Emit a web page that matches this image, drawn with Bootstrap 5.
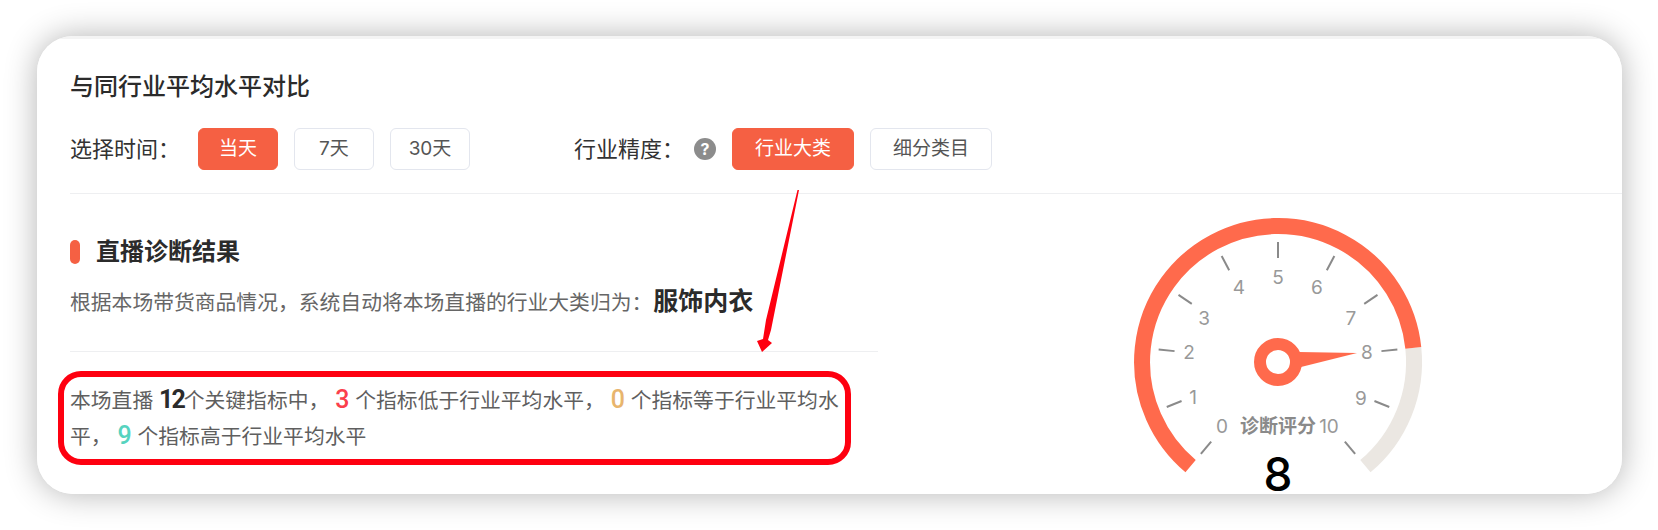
<!doctype html>
<html lang="zh">
<head>
<meta charset="utf-8">
<title>与同行业平均水平对比</title>
<link href="https://cdn.jsdelivr.net/npm/bootstrap@5.3.0/dist/css/bootstrap.min.css" rel="stylesheet">
<style>
html,body{height:530px;overflow:hidden;background:#fff}
body{font-family:Inter,"Noto Sans CJK SC",sans-serif;color:#333}
.stage{position:relative;width:1658px;height:530px;padding:36px 36px 36px 37px}
.panel{height:458px;background:linear-gradient(#f4f4f4 3px,#fff 3px);border-radius:36px;box-shadow:0 0 32px rgba(0,0,0,.3);overflow:hidden;padding:3px 0 0 33px}
.head-title{font-size:24px;line-height:30px;font-weight:500;color:#2b2b2b;margin:0;padding-top:33px}
.filter-row{margin-top:26px;height:42px}
.filter-label{font-size:22px;color:#333;white-space:nowrap}
.time-label{width:128px}
.prec-label{width:120px;margin-left:88px}
.btn.chip{font-size:19px;height:42px;line-height:40px;padding:0;border:1px solid #e3e6ee;border-radius:6px;background:#fff;color:#555;font-weight:400;width:80px;margin-right:16px}
.btn.chip.wide{width:122px}
.btn.chip.on{background:#f56043;border-color:#f56043;color:#fff}
.help-dot{width:22px;height:22px;border-radius:50%;background:#8c8c8c;color:#fff;font-size:16px;font-weight:700;line-height:22px;text-align:center;margin-right:16px}
.rule-full{height:1px;background:#eeeff1;margin-top:23px}
.left-pane{flex:0 0 808px}
.sec-head{margin-top:44px;height:28px}
.sec-mark{width:10px;height:24px;border-radius:5px;background:#f56043;margin-right:16px}
.sec-title{font-size:24px;line-height:28px;font-weight:700;color:#2b2b2b;margin:0}
.sec-desc{font-size:20.8px;line-height:36px;color:#666;margin:17px 0 0;white-space:nowrap}
.sec-desc strong{font-size:25px;font-weight:700;color:#2b2b2b;margin-left:1px}
.rule-part{height:1px;background:#eeeff1;margin-top:30px}
.sum-text{font-size:20.8px;line-height:36px;color:#5f5f5f;width:780px;margin:31px 0 0}
.num{font-family:Roboto,sans-serif;font-size:25px;font-weight:500;line-height:1}
.num-dark{color:#2b2b2b;font-weight:700;letter-spacing:-2px}
.num-red{color:#fb3f4c}
.num-gold{color:#e8b56d}
.num-teal{color:#56d3bf}
.gauge{flex:0 0 340px;width:340px;height:294px;margin:6px 0 0 230px}
.gauge .lbl{font-size:19px;fill:#999;text-anchor:middle;dominant-baseline:central}
.gauge .cap{font-size:19px;font-weight:700;fill:#8a8a8a;text-anchor:middle;dominant-baseline:central}
.gauge .val{font-size:46px;font-weight:500;fill:#000;text-anchor:middle}
.gauge .tick{stroke:#8a8a8a;stroke-width:2}
.notes{position:absolute;left:0;top:0;pointer-events:none}
</style>
</head>
<body>
<div class="stage">
  <div class="panel">
    <h5 class="head-title">与同行业平均水平对比</h5>
    <div class="filter-row d-flex align-items-center">
      <span class="filter-label time-label">选择时间：</span>
      <button type="button" class="btn chip on">当天</button>
      <button type="button" class="btn chip">7天</button>
      <button type="button" class="btn chip">30天</button>
      <span class="filter-label prec-label">行业精度：</span>
      <span class="help-dot">?</span>
      <button type="button" class="btn chip wide on">行业大类</button>
      <button type="button" class="btn chip wide">细分类目</button>
    </div>
    <div class="rule-full"></div>
    <div class="d-flex">
      <div class="left-pane">
        <div class="sec-head d-flex align-items-center">
          <span class="sec-mark"></span>
          <h5 class="sec-title">直播诊断结果</h5>
        </div>
        <p class="sec-desc">根据本场带货商品情况，系统自动将本场直播的行业大类归为：<strong>服饰内衣</strong></p>
        <div class="rule-part"></div>
        <p class="sum-text">本场直播 <span class="num num-dark">12</span>个关键指标中， <span class="num num-red">3</span> 个指标低于行业平均水平， <span class="num num-gold">0</span> 个指标等于行业平均水平， <span class="num num-teal">9</span> 个指标高于行业平均水平</p>
      </div>
      <svg class="gauge" viewBox="0 0 340 294" xmlns="http://www.w3.org/2000/svg">
        <path d="M305.3 147.8A136 136 0 0 1 257.4 266.2" fill="none" stroke="#ebe7e2" stroke-width="16"/>
        <path d="M82.6 266.2A136 136 0 1 1 305.3 147.8" fill="none" stroke="#ff6a4c" stroke-width="16"/>
        <g class="tick">
          <line x1="170" y1="42" x2="170" y2="58" transform="rotate(-140 170 162)"/>
          <line x1="170" y1="42" x2="170" y2="58" transform="rotate(-112 170 162)"/>
          <line x1="170" y1="42" x2="170" y2="58" transform="rotate(-84 170 162)"/>
          <line x1="170" y1="42" x2="170" y2="58" transform="rotate(-56 170 162)"/>
          <line x1="170" y1="42" x2="170" y2="58" transform="rotate(-28 170 162)"/>
          <line x1="170" y1="42" x2="170" y2="58"/>
          <line x1="170" y1="42" x2="170" y2="58" transform="rotate(28 170 162)"/>
          <line x1="170" y1="42" x2="170" y2="58" transform="rotate(56 170 162)"/>
          <line x1="170" y1="42" x2="170" y2="58" transform="rotate(84 170 162)"/>
          <line x1="170" y1="42" x2="170" y2="58" transform="rotate(112 170 162)"/>
          <line x1="170" y1="42" x2="170" y2="58" transform="rotate(140 170 162)"/>
        </g>
        <text class="lbl" x="114" y="226">0</text>
        <text class="lbl" x="85" y="197">1</text>
        <text class="lbl" x="81" y="152">2</text>
        <text class="lbl" x="96" y="118">3</text>
        <text class="lbl" x="131" y="87">4</text>
        <text class="lbl" x="170" y="77">5</text>
        <text class="lbl" x="209" y="87">6</text>
        <text class="lbl" x="243" y="118">7</text>
        <text class="lbl" x="259" y="152">8</text>
        <text class="lbl" x="253" y="198">9</text>
        <text class="lbl" x="221" y="226">10</text>
        <polygon points="191,152 249,153 193,167" fill="#ff6a4c"/>
        <circle cx="170" cy="162" r="18" fill="#fff" stroke="#ff6a4c" stroke-width="12"/>
        <text class="cap" x="170" y="226">诊断评分</text>
        <text class="val" x="170" y="291">8</text>
      </svg>
    </div>
  </div>
  <svg class="notes" width="1658" height="530" viewBox="0 0 1658 530" xmlns="http://www.w3.org/2000/svg">
    <rect x="61" y="374" width="787" height="88" rx="20" fill="none" stroke="#fe0010" stroke-width="6"/>
    <polygon points="797.5,190 799,190 771,330 768,340 772,343 762,352 757,341 763,339 766,320" fill="#fe0010"/>
  </svg>
</div>
<script src="https://cdn.jsdelivr.net/npm/bootstrap@5.3.0/dist/js/bootstrap.bundle.min.js"></script>
</body>
</html>
